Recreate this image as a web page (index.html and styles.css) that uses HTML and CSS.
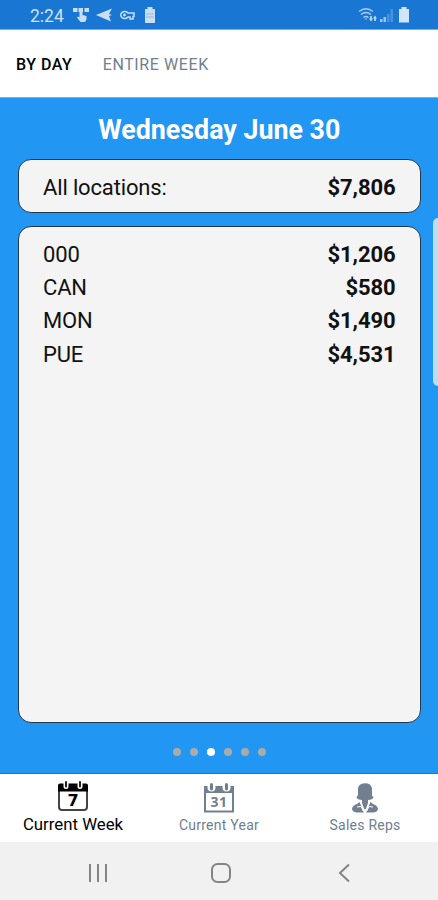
FILE: index.html
```html
<!DOCTYPE html>
<html lang="en">
<head>
    <meta charset="UTF-8">
    <meta name="viewport" content="width=device-width, initial-scale=1.0">
    <title>Sales by Day</title>
    <link rel="stylesheet" href="styles.css">
</head>
<body>
    <div class="screen">
        <header class="status-bar">
            <span class="clock">2:24</span>
            <svg class="status-left" width="84" height="18" viewBox="0 0 84 18" fill="#c9def5">
                <!-- touch -->
                <path d="M0 2h4.500v4H0zM5.500 2h4.500v4H5.500zM11.500 2H16v4h-4.500z"/>
                <path d="M6.500 5h3v4l4 1v3.500L12 16H7.500L4 11.500l1-1 1.500 1z"/>
                <!-- send -->
                <path d="M23 9 39 2.500 36 8l3 1-3 1 2 5.500-7-3z"/>
                <!-- key -->
                <path d="M55 7a4 3.500 0 1 0 0 4h2v2h3v-2.500h1V7z" fill="none" stroke="#c9def5" stroke-width="1.500"/>
                <circle cx="51.500" cy="9" r="1.400"/>
                <!-- battery saver -->
                <path d="M74.500 1h5v2H82v14H72V3h2.500z"/>
                <path d="M73 8h8M73 11h8" stroke="#8fbaea" stroke-width="1"/>
            </svg>
            <svg class="status-right" width="54" height="18" viewBox="0 0 54 18">
                <g fill="none" stroke="#a9cdf1" stroke-width="1.500">
                    <path d="M1 5.500Q8 0 15 5.500"/>
                    <path d="M3 8.500q5-4 10 0"/>
                    <path d="M5.500 11.500q2.500-2 5 0"/>
                </g>
                <path d="M11 12.500h1.200V10h1.600v2.500H15L13 15.500zM15 12.500 17 9.500l2 3h-1.200V15h-1.600v-2.500zM7 12.500h2L8 14z" fill="#c4dcf5"/>
                <path d="M22 16v-3h2.500v3zM25.500 16v-5H28v5z" fill="#9cc5ef"/>
                <path d="M29 16V8h2.500v8zM32.500 16V3H35v13z" fill="#4a92de"/>
                <path d="M43.500 1h5v2H51v13.500H41V3h2.500z" fill="#d3e5f8"/>
            </svg>
        </header>

        <nav class="top-tabs">
            <span class="top-tab active">BY DAY</span>
            <span class="top-tab">ENTIRE WEEK</span>
        </nav>

        <main class="content">
            <h1>Wednesday June 30</h1>

            <div class="card total-card">
                <div class="row"><span>All locations:</span><b>$7,806</b></div>
            </div>

            <div class="card location-card">
                <div class="row"><span>000</span><b>$1,206</b></div>
                <div class="row"><span>CAN</span><b>$580</b></div>
                <div class="row"><span>MON</span><b>$1,490</b></div>
                <div class="row"><span>PUE</span><b>$4,531</b></div>
            </div>

            <div class="dots">
                <i class="dot"></i>
                <i class="dot"></i>
                <i class="dot current"></i>
                <i class="dot"></i>
                <i class="dot"></i>
                <i class="dot"></i>
            </div>

            <div class="edge-handle"></div>
        </main>

        <nav class="bottom-tabs">
            <div class="bottom-tab active">
                <svg width="32" height="32" viewBox="0 0 32 32">
                    <rect x="2" y="5" width="28" height="25" rx="3" fill="#fff" stroke="#444" stroke-width="2"/>
                    <path d="M1 11.500v-6Q1 3.500 3 3.500h26q2 0 2 2v6z" fill="#000"/>
                    <path d="M9 1v5.500M23 1v5.500" stroke="#fff" stroke-width="5" stroke-linecap="round"/>
                    <path d="M9 2v4.500M23 2v4.500" stroke="#222" stroke-width="2" stroke-linecap="round"/>
                    <text x="16" y="25.500" class="date-number">7</text>
                </svg>
                <span>Current Week</span>
            </div>
            <div class="bottom-tab">
                <svg width="32" height="32" viewBox="0 0 32 32">
                    <rect x="2" y="5" width="28" height="24.500" fill="#fff" stroke="#708090" stroke-width="2"/>
                    <path d="M1 4h30v7H1z" fill="#708090"/>
                    <circle cx="8.500" cy="5.500" r="4" fill="#fff"/>
                    <circle cx="23.500" cy="5.500" r="4" fill="#fff"/>
                    <path d="M8.500 2.500v4.500M23.500 2.500v4.500" stroke="#708090" stroke-width="3" stroke-linecap="round"/>
                    <text x="16" y="25" class="date-number small">31</text>
                </svg>
                <span>Current Year</span>
            </div>
            <div class="bottom-tab">
                <svg width="32" height="32" viewBox="0 0 32 32" fill="#708090">
                    <path d="M9 6q1-4 5-4.500 8-1 9 5v7l1.500 2q-1 2-5.500 2.500v3L16.800 27h-1.600L13 21v-3q-4.500-.5-5.500-2.500L9 13z"/>
                    <path d="M10.500 20 15 30.500H7.500q-4.500-.5-4.500-4Q4 23 8 22zM21.500 20l2.500 2q4 1 5 4.500 0 3.500-4.500 4H17z"/>
                    <path d="m8 25 4-.5 2.500 5M24 25l-4-.5-2.500 5" fill="none" stroke="#fff" stroke-width="1"/>
                </svg>
                <span>Sales Reps</span>
            </div>
        </nav>

        <footer class="system-nav">
            <svg width="20" height="20" viewBox="0 0 20 20"><path d="M2 1v18M10 1v18M18 1v18"/></svg>
            <svg width="22" height="22" viewBox="0 0 22 22"><rect x="2" y="2" width="18" height="18" rx="5.500"/></svg>
            <svg width="12" height="20" viewBox="0 0 12 20"><path d="M11 1.500 2 10l9 8.500"/></svg>
        </footer>
    </div>
</body>
</html>
```
FILE: styles.css
```css
body {
    margin: 0;
    font-family: Roboto, "Liberation Sans", sans-serif;
    background-color: #f1f1f1;
}

.screen {
    display: flex;
    flex-direction: column;
    width: 438px;
    height: 900px;
    overflow: hidden;
}

.status-bar {
    display: flex;
    align-items: center;
    box-sizing: border-box;
    height: 30px;
    padding: 1px 26px 0 30px;
    background-color: #1976d2;
    border-bottom: 1px solid #75aee8;
    color: #cfe2f7;
}

.clock {
    width: 43px;
    padding-top: 1px;
    font-size: 17.5px;
}

.status-right {
    margin-left: auto;
}

.top-tabs {
    display: flex;
    align-items: center;
    gap: 30.5px;
    box-sizing: border-box;
    height: 68px;
    padding: 2px 16px 0;
    background-color: #fff;
    border-bottom: 1px solid #75aee8;
}

.top-tab {
    color: #708090;
    font-size: 16px;
    letter-spacing: 0.6px;
}

.top-tab.active {
    color: #000;
    font-weight: 500;
    letter-spacing: 0.5px;
}

.content {
    position: relative;
    display: flex;
    flex-direction: column;
    box-sizing: border-box;
    height: 676px;
    padding: 0 17.5px 0 18px;
    background-color: #2196f3;
    border-bottom: 1px solid #1976d2;
}

h1 {
    margin: 0;
    height: 61px;
    line-height: 64px;
    text-align: center;
    color: #fff;
    font-size: 26.8px;
    font-weight: bold;
}

.card {
    box-sizing: border-box;
    padding: 11px 24px 0;
    background-color: #f4f4f4;
    border: 1.5px solid #22384c;
    border-radius: 13px;
}

.total-card {
    height: 54px;
    margin-bottom: 13px;
}

.location-card {
    height: 497px;
}

.row {
    display: flex;
    justify-content: space-between;
    height: 33.2px;
    line-height: 33.2px;
    font-size: 22px;
    letter-spacing: -0.15px;
    color: #111;
}

.row b {
    letter-spacing: -0.1px;
}

.dots {
    display: flex;
    justify-content: center;
    gap: 9px;
    margin-top: 25px;
}

.dot {
    width: 8px;
    height: 8px;
    border-radius: 50%;
    background-color: #aaa;
}

.dot.current {
    background-color: #fff;
}

/* edge panel handle, hangs over the right side of the screen */
.edge-handle {
    position: absolute;
    top: 120px;
    right: 0;
    width: 5px;
    height: 168px;
    border-radius: 5px 0 0 5px;
    background-color: #bcdcf7;
}

.bottom-tabs {
    display: flex;
    height: 68px;
    background-color: #fff;
}

.bottom-tab {
    display: flex;
    flex: 1;
    flex-direction: column;
    align-items: center;
    box-sizing: border-box;
    padding-top: 8px;
    color: #708090;
    font-size: 14px;
    line-height: 22px;
    letter-spacing: 0.25px;
}

.bottom-tab.active {
    padding-top: 6px;
    color: #000;
    font-size: 16.8px;
    line-height: 24px;
    letter-spacing: 0;
}

.date-number {
    font-family: "DejaVu Sans", sans-serif;
    font-size: 16px;
    font-weight: bold;
    letter-spacing: 0;
    text-anchor: middle;
}

.date-number.small {
    font-family: "Open Sans", sans-serif;
    font-size: 14px;
    letter-spacing: 0.5px;
    fill: #708090;
}

.system-nav {
    display: flex;
    align-items: center;
    justify-content: space-between;
    box-sizing: border-box;
    height: 58px;
    padding: 4px 88.5px 0 88px;
    background-color: #f1f1f1;
}

.system-nav svg {
    fill: none;
    stroke: #858585;
    stroke-width: 2;
}

.system-nav svg:nth-child(2) {
    margin-right: 3px;
}
```
